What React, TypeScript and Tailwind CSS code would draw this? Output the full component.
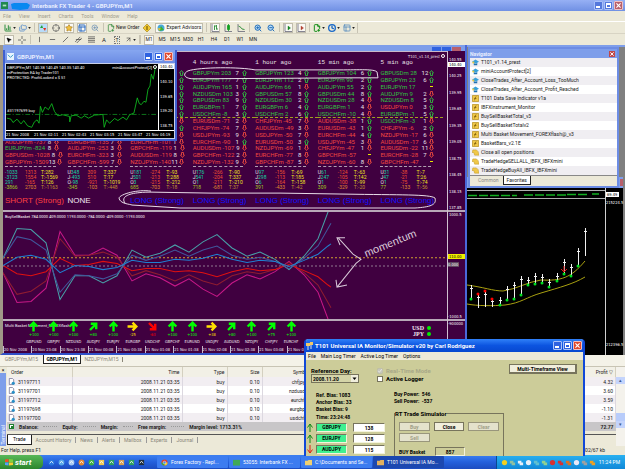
import type { ReactNode } from "react";
import {
  ArrowUpRight,
  BarChart3,
  Clock,
  Crosshair,
  FilePlus2,
  Folders,
  Layout,
  MousePointer2,
  Star,
  ZoomIn,
  ZoomOut,
} from "lucide-react";

type Dir = "u" | "d" | "e" | "";
type Row = [string, number, string, Dir];
type Sum = [string, string, string, string];

const hidden = (n: number): Row[] =>
  Array.from({ length: n }, () => ["", 0, "", ""] as Row);

const columns: { title: string; rows: Row[]; sums: Sum[]; bias: string }[] = [
  {
    title: "",
    rows: [
      ...hidden(10),
      ["AUDJPYm", -737, "8", "d"],
      ["EURJPYm", -824, "8", "d"],
      ["GBPUSDm", -1028, "8", "d"],
      ["GBPJPYm", -1509, "13", "d"],
    ],
    sums: [
      ["", "-1033", "1313", "T:282"],
      ["", "-3123", "1554", "T:-1569"],
      ["", "291", "-165", "T:126"],
      ["", "-3866", "2703", "T:-1163"],
    ],
    bias: "SHORT (Strong)",
  },
  {
    title: "",
    rows: [
      ...hidden(10),
      ["EURGBPm", -135, "7", "d"],
      ["AUDJPYm", -253, "3", "d"],
      ["EURCHFm", -323, "3", "d"],
      ["GBPCHFm", -599, "7", "d"],
    ],
    sums: [
      ["U", "348", "309", "T:337"],
      ["J", "-493", "510", "T:17"],
      ["O", "-98", "-921", "T:-1019"],
      ["", "-345", "-103", "T:-448"],
    ],
    bias: "NONE",
  },
  {
    title: "",
    rows: [
      ["", 0, "", "u"],
      ["", 0, "", "u"],
      ["", 0, "", "u"],
      ["", 0, "", "u"],
      ["", 0, "", "u"],
      ["", 0, "", "u"],
      ["", 0, "", "u"],
      ["", 0, "", "d"],
      ["", 0, "", "u"],
      ["", 0, "", "d"],
      ["EURCHFm", -101, "1", "d"],
      ["GBPCHFm", -119, "1", "d"],
      ["AUDUSDm", -119, "8", "d"],
      ["NZDJPYm", -140, "11", "d"],
    ],
    sums: [
      ["U", "181", "-274", "T:-93"],
      ["J", "501", "-213", "T:288"],
      ["O", "3", "-215", "T:-212"],
      ["", "685", "-703", "T:-18"],
    ],
    bias: "LONG (Strong)",
  },
  {
    title: "4 hours ago",
    rows: [
      ["GBPJPYm", 203, "7", "u"],
      ["EURJPYm", 177, "7", "u"],
      ["AUDJPYm", 165, "1", "u"],
      ["NZDUSDm", 103, "3", "u"],
      ["GBPUSDm", 83, "9", "u"],
      ["EURGBPm", 1, "7", "u"],
      ["USDCHFm", -8, "3", "u"],
      ["EURUSDm", -71, "2", "d"],
      ["CHFJPYm", -74, "7", "d"],
      ["USDJPYm", -93, "9", "d"],
      ["EURCHFm", -90, "1", "u"],
      ["AUDUSDm", -107, "9", "d"],
      ["GBPCHFm", -122, "2", "d"],
      ["NZDJPYm", -132, "9", "d"],
    ],
    sums: [
      ["U", "176", "-266", "T:-90"],
      ["J", "541", "-204", "T:337"],
      ["O", "1", "-211", "T:-210"],
      ["", "718", "-681", "T:37"],
    ],
    bias: "LONG (Strong)",
  },
  {
    title: "1 hour ago",
    rows: [
      ["GBPJPYm", 123, "4", "u"],
      ["EURJPYm", 112, "2", "u"],
      ["AUDJPYm", 66, "1", "d"],
      ["GBPUSDm", 57, "8", "u"],
      ["NZDUSDm", 30, "2", "u"],
      ["EURGBPm", 6, "4", "u"],
      ["USDCHFm", 2, "6", "u"],
      ["CHFJPYm", -45, "7", "d"],
      ["AUDUSDm", -49, "3", "d"],
      ["USDJPYm", -50, "7", "d"],
      ["EURUSDm", -50, "3", "u"],
      ["NZDJPYm", -69, "1", "d"],
      ["EURCHFm", -77, "8", "d"],
      ["GBPCHFm", -87, "5", "d"],
    ],
    sums: [
      ["U", "97", "-156", "T:-69"],
      ["J", "298", "-113", "T:185"],
      ["O", "6", "-164", "T:-158"],
      ["", "391", "-433", "T:-42"],
    ],
    bias: "LONG (Strong)",
  },
  {
    title: "15 min ago",
    rows: [
      ["GBPJPYm", 104, "6", "u"],
      ["EURJPYm", 90, "2", "u"],
      ["AUDJPYm", 55, "2", "u"],
      ["GBPUSDm", 44, "8", "u"],
      ["NZDUSDm", 28, "4", "d"],
      ["EURGBPm", 1, "4", "d"],
      ["USDCHFm", -10, "4", "d"],
      ["AUDUSDm", -38, "1", "u"],
      ["EURUSDm", -43, "1", "u"],
      ["EURCHFm", -44, "4", "u"],
      ["USDJPYm", -45, "3", "d"],
      ["CHFJPYm", -47, "1", "d"],
      ["GBPCHFm", -57, "", "e"],
      ["NZDJPYm", -60, "8", "d"],
    ],
    sums: [
      ["U", "61", "-124", "T:-63"],
      ["J", "247", "-105", "T:142"],
      ["O", "1", "-100", "T:-99"],
      ["", "309", "-329", "T:-20"],
    ],
    bias: "LONG (Strong)",
  },
  {
    title: "5 min ago",
    rows: [
      ["GBPUSDm", 28, "12", "u"],
      ["GBPJPYm", 23, "6", "u"],
      ["EURJPYm", 17, "", "e"],
      ["AUDJPYm", 9, "2", "d"],
      ["NZDUSDm", 8, "5", "u"],
      ["USDJPYm", 0, "3", "u"],
      ["EURGBPm", -1, "5", "u"],
      ["USDCHFm", -3, "1", "d"],
      ["CHFJPYm", -6, "2", "u"],
      ["NZDJPYm", -17, "6", "d"],
      ["AUDUSDm", -17, "6", "d"],
      ["EURUSDm", -22, "11", "d"],
      ["EURCHFm", -28, "7", "d"],
      ["GBPCHFm", -47, "", "e"],
    ],
    sums: [
      ["U", "31", "-38", "T:-7"],
      ["J", "47", "-21", "T:26"],
      ["O", "1", "-75", "T:-74"],
      ["", "77", "-133", "T:-56"],
    ],
    bias: "LONG (Strong)",
  },
];

// x, fast, mid, slow basket totals; the sell side mirrors them around zero
const basket: [number, number, number, number][] = [
  [3, 258, 258, 265],
  [17, 229, 237, 257],
  [31, 230, 240, 255],
  [46, 243, 250, 259],
  [60, 298, 291, 272],
  [75, 275, 274, 265],
  [89, 275, 275, 266],
  [103, 282, 278, 269],
  [117, 275, 273, 267],
  [132, 250, 255, 260],
  [146, 257, 260, 262],
  [160, 253, 256, 262],
  [175, 245, 250, 259],
  [189, 252, 256, 260],
  [203, 242, 250, 258],
  [217, 235, 246, 254],
  [232, 248, 255, 259],
  [247, 256, 259, 262],
  [260, 252, 257, 260],
  [275, 259, 261, 261],
  [289, 269, 268, 266],
  [304, 256, 258, 260],
  [318, 239, 246, 254],
  [328, 213, 229, 246],
  [331, 205, 224, 244],
];

const line = (i: 1 | 2 | 3, mirror = false) =>
  basket.map((p) => `${p[0]},${mirror ? 530 - p[i] : p[i]}`).join(" ");

const movement: [string, string, number, string][] = [
  ["GBPUSD", "+100", 0, "#00ff00"],
  ["GBPJPY", "+100", 0, "#00ff00"],
  ["NZDUSD", "+100", 0, "#00ff00"],
  ["AUDJPY", "+80", 45, "#00ff00"],
  ["EURJPY", "+100", 0, "#00ff00"],
  ["EURGBP", "-25", 90, "#ffe000"],
  ["USDCHF", "-63", 135, "#ff0000"],
  ["GBPCHF", "+100", 0, "#00ff00"],
  ["EURUSD", "+100", 0, "#00ff00"],
  ["USDJPY", "+38", 90, "#ffe000"],
  ["AUDUSD", "+80", 45, "#00ff00"],
  ["NZDJPY", "+100", 0, "#00ff00"],
  ["CHFJPY", "+75", 45, "#00ff00"],
  ["EURCHF", "+100", 0, "#00ff00"],
];

const times = [
  "20 Nov 2008",
  "20 Nov 23:08",
  "20 Nov 23:38",
  "21 Nov 00:08",
  "21 Nov 00:38",
  "21 Nov 01:08",
  "21 Nov 01:38",
  "21 Nov 02:08",
  "21 Nov 02:38",
  "21 Nov 03:08",
  "21 Nov 03:38",
];

const prices = [
  "140.55",
  "140.25",
  "139.95",
  "139.65",
  "139.35",
  "139.05",
  "138.75",
  "138.45",
  "138.15",
  "137.85",
];

const favorites: [string, "hat" | "ind" | "script"][] = [
  ["T101_v1.14_prest", "hat"],
  ["miniAccountProtect[2]", "hat"],
  ["CloseTrades_After_Account_Loss_TooMuch", "hat"],
  ["CloseTrades_After_Account_Profit_Reached", "hat"],
  ["T101 Data Save Indicator v1a", "ind"],
  ["IBFXInstrument_Monitor", "ind"],
  ["BuySellBasketTotal_v3", "ind"],
  ["BuySellBasketTotalv2", "ind"],
  ["Multi Basket Movement_FOREXflash@_v3", "ind"],
  ["BasketBars_v2.1E", "ind"],
  ["Close all open positions", "script"],
  ["TradeHedgeSELLALL_IBFX_IBFXmini", "script"],
  ["TradeHedgeBuyAll_IBFX_IBFXmini", "script"],
];

const orders = [
  ["31197711", "chfjpym", "4.32"],
  ["31197701", "nzdusdm", "3.60"],
  ["31197712", "eurchfm", "3.59"],
  ["31197698", "eurgbpm", "-1.10"],
  ["31197700", "usdchfm", "-1.31"],
];

// x, high, low, dot y, dot color
const bars: [number, number, number, number, string][] = [
  [4, 105, 118, 119, "#00e020"],
  [11, 114, 128, 114, "#ff0000"],
  [18, 111, 127, 111, "#ff0000"],
  [25, 118, 127, 119, "#ff0000"],
  [33, 117, 126, 125, "#00e020"],
  [40, 106, 120, 120, "#00e020"],
  [47, 102, 118, 119, "#00e020"],
  [54, 96, 115, 115, "#00e020"],
  [61, 97, 105, 105, "#00e020"],
  [68, 93, 104, 104, "#00e020"],
  [75, 94, 103, 103, "#00e020"],
  [82, 99, 106, 107, "#00e020"],
  [90, 93, 100, 101, "#00e020"],
  [97, 79, 95, 94, "#00e020"],
  [104, 84, 96, 96, "#00e020"],
  [111, 68, 86, 86, "#00e020"],
  [118, 48, 76, 0, ""],
];

function ValueArrow({ dir }: { dir: Dir }) {
  if (dir === "") return null;
  if (dir === "e") return <span className="h-px w-[3px] bg-[#e8e800]" />;
  return (
    <svg
      viewBox="0 0 5 6"
      className={dir === "u" ? "h-[6px] w-[5px] text-[#30b840]" : "h-[6px] w-[5px] rotate-180 text-[#e84840]"}
    >
      <path d="M2.5 .5 4.5 3H3.5V5.5H1.5V3H.5Z" fill="none" stroke="currentColor" strokeWidth=".9" />
    </svg>
  );
}

function WinButtons({ dim = false }: { dim?: boolean }) {
  const blue = dim ? "bg-[#5478dc]" : "bg-[#2f62e0]";
  return (
    <div className="flex gap-px">
      <button aria-label="Minimize" className={`flex size-[9px] items-end rounded-[1px] border border-[#a8c0f8] p-px ${blue}`}>
        <span className="h-[2px] w-[4px] bg-white" />
      </button>
      <button aria-label="Maximize" className={`size-[9px] rounded-[1px] border border-[#a8c0f8] p-px ${blue}`}>
        <span className="block size-[5px] border border-t-2 border-white" />
      </button>
      <button
        aria-label="Close"
        className={`flex size-[9px] items-center justify-center rounded-[1px] border border-[#f0c0c0] ${dim ? "bg-[#b8606c]" : "bg-[#e0482c]"}`}
      >
        <svg viewBox="0 0 6 6" className="size-[5px]" stroke="#fff" strokeWidth="1.4">
          <path d="M.5 .5 5.5 5.5M5.5 .5 .5 5.5" />
        </svg>
      </button>
    </div>
  );
}

function Tool({ label, active = false, children }: { label: string; active?: boolean; children: ReactNode }) {
  return (
    <button
      aria-label={label}
      className={`flex h-[10px] min-w-[10px] items-center justify-center ${active ? "border border-[#c0bcac] bg-[#faf9f4]" : ""}`}
    >
      {children}
    </button>
  );
}

function Candles({ color, kind }: { color: string; kind: number }) {
  return (
    <svg viewBox="0 0 8 8" className="size-[8px]" fill="none" stroke="#667" strokeWidth=".8">
      <path d="M1 0V7.5H8" />
      {kind === 0 && <path d="M3.5 1.5V6M5.5 1V5.5M3.5 2H5M5.5 5H7" stroke={color} />}
      {kind === 1 && <path d="M4.5 0V7M3.5 1.5H5.5V5.5H3.5Z" stroke={color} fill={color} />}
      {kind === 2 && <path d="M1.5 2 4 3.5 5 5 7.5 5.5" stroke={color} />}
      {kind === 3 && <path d="M4 2V6L6.500 4Z" stroke={color} strokeWidth=".4" fill={color} />}
    </svg>
  );
}

function Drop() {
  return (
    <svg viewBox="0 0 4 3" className="ml-px h-[2px] w-[3px]">
      <path d="M0 0H4L2 3Z" fill="#222" />
    </svg>
  );
}

function Toolbars() {
  return (
    <div className="bg-[#ece9d8] text-[5px]">
      <div className="flex h-[12px] items-center border-t border-white pl-[4px]">
        <div className="flex shrink-0 items-center gap-[3px] border-r border-[#c8c4b4] pr-[2px]">
          <Tool label="New chart">
            <BarChart3 className="size-[8px] text-[#2a8c3c]" strokeWidth={3} />
            <Drop />
          </Tool>
          <Tool label="Profiles">
            <Folders className="size-[8px] text-[#3878c8]" />
            <Drop />
          </Tool>
          <span className="h-[9px] w-px bg-[#c8c4b4]" />
          <Tool label="Market watch" active>
            <svg viewBox="0 0 8 8" className="size-[8px]">
              <path d="M0 0H8V8H0Z" fill="#b8dcf8" />
              <path d="M1 4 3 1 4 4Z" fill="#20a030" />
              <path d="M4 4H7L6 7Z" fill="#e03020" />
            </svg>
          </Tool>
          <Tool label="Data window">
            <Crosshair className="size-[8px] text-[#555]" />
          </Tool>
          <Tool label="Navigator" active>
            <Star className="size-[8px] fill-[#f0c040] text-[#a87818]" />
          </Tool>
          <Tool label="Terminal" active>
            <Layout className="size-[8px] text-[#2868c0]" strokeWidth={3} />
          </Tool>
          <Tool label="Tester">
            <ZoomIn className="size-[8px] text-[#6088b0]" />
          </Tool>
          <span className="h-[9px] w-px bg-[#c8c4b4]" />
          <button className="flex h-[10px] items-center gap-px whitespace-nowrap">
            <FilePlus2 className="size-[8px] text-[#20802c]" />
            New Order
          </button>
          <Tool label="MetaEditor">
            <svg viewBox="0 0 8 8" className="size-[8px]">
              <path d="M4 0 8 4 4 8 0 4Z" fill="#f0c830" stroke="#a07c10" strokeWidth=".6" />
              <path d="M4 2V6" stroke="#604800" />
            </svg>
          </Tool>
          <button className="flex h-[10px] items-center gap-px whitespace-nowrap border border-[#c0bcac] bg-[#faf9f4] px-px">
            <svg viewBox="0 0 8 8" className="size-[8px]">
              <circle cx="4" cy="4" r="3.500" fill="#48a8d8" />
              <path d="M2 7 4 2 7 6Z" fill="#38b038" />
              <path d="M1 4 4 4.500 2 7Z" fill="#e8c020" />
            </svg>
            Expert Advisors
          </button>
          <span className="h-[9px] w-px bg-[#c8c4b4]" />
          <Tool label="Bar chart" active>
            <Candles color="#108020" kind={0} />
          </Tool>
          <Tool label="Candlesticks">
            <Candles color="#10a020" kind={1} />
          </Tool>
          <Tool label="Line chart">
            <Candles color="#108020" kind={2} />
          </Tool>
          <span className="h-[9px] w-px bg-[#c8c4b4]" />
          <Tool label="Zoom in">
            <ZoomIn className="size-[8px] fill-[#b8dcf8] text-[#2870b8]" strokeWidth={3} />
          </Tool>
          <Tool label="Zoom out">
            <ZoomOut className="size-[8px] fill-[#b8dcf8] text-[#2870b8]" strokeWidth={3} />
          </Tool>
          <span className="h-[9px] w-px bg-[#c8c4b4]" />
          <Tool label="Auto scroll" active>
            <Candles color="#108020" kind={3} />
          </Tool>
          <Tool label="Chart shift" active>
            <Candles color="#b04030" kind={3} />
          </Tool>
          <span className="h-[9px] w-px bg-[#c8c4b4]" />
          <Tool label="Indicators">
            <FilePlus2 className="size-[8px] text-[#18901c]" strokeWidth={3} />
            <Drop />
          </Tool>
          <Tool label="Periods">
            <Clock className="size-[8px] text-[#1868c8]" strokeWidth={4} />
            <Drop />
          </Tool>
          <Tool label="Templates">
            <Layout className="size-[8px] text-[#3878b8]" />
            <Drop />
          </Tool>
        </div>
      </div>
      <div className="flex h-[12px] items-center gap-[3px] border-t border-[#d8d4c4] pl-[4px]">
        <Tool label="Cursor" active>
          <MousePointer2 className="size-[6px] fill-black text-black" />
        </Tool>
        <Tool label="Crosshair">
          <svg viewBox="0 0 8 8" className="size-[8px]" stroke="#555" strokeWidth=".8">
            <path d="M4 0V3M4 5V8M0 4H3M5 4H8" />
          </svg>
        </Tool>
        <span className="h-[9px] w-px bg-[#c8c4b4]" />
        {["M4 1V7", "M1 4H7", "M1 7 7 1", "M0 7 6 1M2 8 8 2M1 4 7 4", "M0 1H8M0 3H8M0 5H8M0 7H8"].map((d) => (
          <Tool key={d} label="Draw line">
            <svg viewBox="0 0 8 8" className="size-[7px]" stroke="#444" strokeWidth=".8">
              <path d={d} />
            </svg>
          </Tool>
        ))}
        <Tool label="Text">
          <span className="text-[6px]">A</span>
        </Tool>
        <Tool label="Text label">
          <span className="border border-dotted border-[#777] px-px leading-[6px]">T</span>
        </Tool>
        <Tool label="Arrows">
          <ArrowUpRight className="size-[7px] text-[#333]" />
          <Drop />
        </Tool>
        <span className="h-[9px] w-[2px] bg-[#c8c4b4]" />
        <Tool label="M1" active>
          M1
        </Tool>
        {["M5", "M15", "M30", "H1", "H4", "D1", "W1", "MN"].map((p) => (
          <Tool key={p} label={p}>
            {p}
          </Tool>
        ))}
      </div>
    </div>
  );
}

function SignalTable() {
  return (
    <div className="relative flex h-[159px] flex-col border-t border-[#c8b8c8] pl-[2px] text-[#e8e0e8]">
      <div className="flex h-[8px] items-center justify-end gap-px pr-[2px] font-['DejaVu_Sans_Condensed',sans-serif] text-[4px]">
        T101_v1.14_prest
        <span className="size-[4px] rounded-full border border-white" />
      </div>
      <div className="grid w-[438px] grid-cols-7">
        {columns.map((c, i) => (
          <div key={i} className="min-w-0">
            <h3 className="h-[10px] whitespace-nowrap font-['Liberation_Mono',monospace] text-[6px] leading-[6px]">{c.title}</h3>
            <div className="flex h-[95px] flex-col text-[6px] leading-[6px]">
              {c.rows.map((r, j) => (
                <div
                  key={j}
                  className={`flex flex-1 items-center whitespace-nowrap ${j === 6 ? "border-b border-dashed border-[#a0a020]" : ""} ${
                    r[1] > 0 || j === 6 || (i === 6 && j === 7) || (i === 0 && j === 11) ? "text-[#30c040]" : "text-[#f04840]"
                  }`}
                >
                  <span className="min-w-[41px]">{r[0] && `${r[0]} ${r[1]}`}</span>
                  <span className="min-w-[7px] text-center text-[#e8e0e8]">{r[2]}</span>
                  <span className="flex w-[7px] justify-center">
                    <ValueArrow dir={r[3]} />
                  </span>
                </div>
              ))}
            </div>
            <div className="mt-px mr-[12px] mb-[3px] border-t border-dashed border-[#b0a0b0]" />
            {c.sums.map((s, j) => (
              <div key={j} className="flex h-[5px] items-center whitespace-nowrap text-[5px] leading-[5px]">
                <span className="flex w-[20px]">
                  {s[0]}
                  <span className={j === 3 ? "text-[#a0c820]" : "text-[#10d8a0]"}>{s[1]}</span>
                </span>
                <span className={j === 3 ? "w-[16px] text-[#e08830]" : "w-[16px] text-[#f05030]"}>{s[2]}</span>
                <span className={j === 3 ? "text-[#c09030]" : "text-[#f0e020]"}>{s[3]}</span>
              </div>
            ))}
            <p
              className={`mt-[6px] whitespace-nowrap font-['Liberation_Sans',sans-serif] text-[8px] leading-[10px] ${
                i === 0 ? "text-[#ff4040]" : i === 1 ? "text-[#f0e8f0]" : "text-[#1010ff]"
              }`}
            >
              {c.bias}
            </p>
          </div>
        ))}
      </div>
      {/* hand drawn loops */}
      <svg viewBox="3 52 444 159" preserveAspectRatio="none" className="absolute inset-0 h-full w-full" fill="none" stroke="#e8dce8" strokeWidth="1">
        <path d="M188 71C182 74 184 79 194 79L350 78 378 78 377 72C374 69 360 70 340 70L255 70C240 67 200 67 188 71Z" />
        <path d="M151 192C138 190 120 195 119 199 120 205 130 205 132 206L180 209 290 209 415 209C430 208 437 206 435 199 430 195 400 196 345 195L280 194 210 194 151 193C130 193 120 197 125 204" />
      </svg>
    </div>
  );
}

function MainChart() {
  return (
    <section className="absolute inset-y-0 left-0 flex w-[467px] flex-col border-r-2 border-b-2 border-l-[3px] border-r-[#4a68d8] border-b-[#3050c8] border-l-[#a09888] bg-[#400040]">
      <header className="flex h-[6px] shrink-0 items-end justify-end gap-px overflow-hidden bg-[#7e9eea] pr-[4px]">
        <span className="h-[4px] w-[9px] bg-[#2f62e0]" />
        <span className="h-[4px] w-[9px] bg-[#2f62e0]" />
        <span className="h-[4px] w-[9px] bg-[#b8606c]" />
      </header>
      <div className="flex min-h-0 flex-1">
        <div className="flex min-w-0 flex-1 flex-col border-r border-[#d0c0d0]">
          <SignalTable />
          <div className="relative min-h-0 flex-1 border-t-2 border-[#b8a8b8]">
            <p className="absolute top-[2px] left-[2px] text-[4px] leading-[6px] text-white">
              BuySellBasket 784.0000 409.0000 1193.0000 -784.0000 -409.0000 -1193.0000
            </p>
            <svg viewBox="3 213 444 104" preserveAspectRatio="none" className="h-full w-full" fill="none" strokeWidth="1">
              <path d="M3 257.500H447" stroke="#d0a030" strokeDasharray="2 2" />
              <path d="M3 265.500H447" stroke="#907890" strokeDasharray="2 2" />
              <polyline points={line(1, true)} stroke="#c81888" />
              <polyline points={line(2, true)} stroke="#901c30" />
              <polyline points={line(3, true)} stroke="#e01010" />
              <polyline points={line(1)} stroke="#48a0a8" />
              <polyline points={line(2)} stroke="#40589c" />
              <polyline points={line(3)} stroke="#2080d0" />
              <path d="M338 238 353 254 361 259 356 263 337 286M345 238 337 238 340 245M336 279 337 286 347 284" stroke="#d8c8d8" />
              <text x="366" y="257" transform="rotate(-22 366 257)" fill="#d8c8d8" stroke="none" className="font-['Lato',sans-serif] text-[11px]">
                momentum
              </text>
            </svg>
          </div>
          <div className="relative h-[27px] shrink-0 border-t-2 border-[#b8a8b8] text-[#f0e8f0]">
            <p className="absolute top-[2px] left-[2px] text-[4px] leading-[6px]">Multi Basket Movement_FOREXflash</p>
            <div className="relative ml-[21px] grid w-[277px] grid-cols-14">
              {movement.map(([pair, pct, deg, color]) => (
                <div key={pair} className="flex min-w-0 flex-col items-center font-['DejaVu_Sans_Condensed',sans-serif] text-[4px] leading-[6px]">
                  <svg viewBox="0 0 10 10" className="size-[11px]">
                    <path d="M5 9.500V1.500M1.500 5 5 1.500 8.500 5" fill="none" stroke={color} strokeWidth="2.200" transform={`rotate(${deg} 5 5)`} />
                  </svg>
                  <span style={{ color }}>{pct}</span>
                  <span className="mt-px">{pair}</span>
                </div>
              ))}
            </div>
            <ul className="absolute top-[4px] right-[16px] font-['Liberation_Serif',serif] text-[6px] leading-[6px] font-bold">
              {["USD", "JPY"].map((c) => (
                <li key={c} className="flex items-center justify-end gap-[3px]">
                  {c}
                  <span className="size-[4px] rounded-full bg-[#00f000]" />
                </li>
              ))}
            </ul>
          </div>
          <div className="grid h-[7px] w-[312px] shrink-0 grid-cols-11 font-['DejaVu_Sans_Condensed',sans-serif] text-[4px] leading-[7px] text-[#f0e8f0]">
            {times.map((t) => (
              <span key={t} className="min-w-0 whitespace-nowrap border-l border-[#c8b8c8]">
                {t}
              </span>
            ))}
          </div>
        </div>
        <div className="flex w-[17px] shrink-0 flex-col font-['DejaVu_Sans_Condensed',sans-serif] text-[4px] leading-[5px] text-white">
          <div className="relative flex h-[159px] flex-col justify-between pt-[6px] pl-px">
            {prices.map((p) => (
              <span key={p}>{p}</span>
            ))}
            <span className="absolute top-[11px] left-0 w-full bg-white pl-px text-black">140.40</span>
          </div>
          <div className="flex min-h-0 flex-1 flex-col border-t-2 border-[#b8a8b8]">
            <span className="pl-px">1000.5</span>
            <span className="mt-[37px] bg-[#f0f000] pl-px text-black">110.00</span>
            <span className="mt-[3px] w-[11px] bg-[#604860]">0.000</span>
            <span className="mt-auto">-1000.5</span>
          </div>
          <span className="h-[34px] shrink-0 border-t-2 border-[#b8a8b8]">-900000</span>
        </div>
      </div>
    </section>
  );
}

function MiniChart() {
  return (
    <section className="absolute top-[5px] left-[3px] flex h-[91px] w-[174px] flex-col border-2 border-t-0 border-[#4060d0] bg-black">
      <header className="flex h-[13px] shrink-0 items-center justify-between bg-linear-to-b from-[#86a6f0] to-[#6c8ce4] px-[2px]">
        <h2 className="flex items-center gap-[3px] text-[6px] font-bold text-[#e8eeff]">
          <svg viewBox="0 0 8 8" className="size-[7px]">
            <path d="M0 0H8V8H0Z" fill="#e8f4ff" />
            <path d="M1 2 4 5 7 2" stroke="#2090c0" fill="none" />
          </svg>
          GBPJPYm,M1
        </h2>
        <WinButtons />
      </header>
      <div className="relative flex min-h-0 flex-1 flex-col border border-[#c8d0e8] text-[4px] leading-[5px] text-white">
        <div className="flex min-h-0 flex-1">
          <div className="relative min-w-0 flex-1">
            <div className="absolute inset-x-0 top-px flex justify-between px-px whitespace-nowrap">
              <p>
                GBPJPYm,M1 140.38 140.49 140.35 140.40
                <br />
                mProtection EA by Trader101
                <br />
                PROTECTED: ProfitLocked = $ 51
              </p>
              <span className="flex gap-px">
                miniAccountProtect[2]
                <span className="size-[4px] rounded-full border border-white" />
              </span>
            </div>
            <svg viewBox="15 195 455 195" preserveAspectRatio="none" className="h-full w-full" fill="none" strokeWidth="2.500">
              <path d="M15 344H470" stroke="#108820" strokeDasharray="14 6 3 6" />
              <polyline
                stroke="#10c020"
                points="18,355 30,358 36,368 48,358 60,372 68,362 80,378 92,382 100,366 108,360 114,370 118,320 124,338 132,322 142,330 152,312 160,335 170,348 185,345 205,350 206,366 210,348 225,346 240,355 250,348 262,355 280,346 305,344 309,382 316,360 325,370 340,356 350,362 365,352 376,360 385,345 398,340 408,295 414,312 420,315 428,305 434,308 440,270 446,260 450,225 456,240 462,205"
              />
            </svg>
            <span className="absolute bottom-[17px] left-px">#31197699 buy</span>
          </div>
          <div className="flex w-[16px] flex-col justify-between border-l border-white pb-[2px] font-['DejaVu_Sans_Condensed',sans-serif]">
            <span className="bg-white pl-px text-black">140.40</span>
            <span className="pl-px">140.10</span>
            <span className="pl-px">139.65</span>
            <span className="pl-px">139.20</span>
            <span className="pl-px">138.75</span>
          </div>
        </div>
        <div className="grid h-[8px] grid-cols-6 border-t border-white font-['DejaVu_Sans_Condensed',sans-serif] leading-[7px]">
          {["21 Nov 2008", "21 Nov 02:11", "21 Nov 02:43", "21 Nov 03:15", "21 Nov 03:47", "21 Nov 04:19"].map((t) => (
            <span key={t} className="min-w-0 whitespace-nowrap">
              {t}
            </span>
          ))}
        </div>
      </div>
    </section>
  );
}

function BasketBars() {
  return (
    <section className="absolute top-[143px] right-[2px] bottom-0 left-[467px] flex bg-black font-['DejaVu_Sans_Condensed',sans-serif] text-[4px] leading-[5px] text-white">
      <svg viewBox="0 8 138 167" preserveAspectRatio="none" className="h-full min-w-0 flex-1" fill="none">
        <path d="M0 10.500H138M0 18.500H138" stroke="#b0b0b0" />
        <path d="M1 15.500H50M57 15H100M100 14.500H120M125 14H132" stroke="#10b020" strokeDasharray="9 2" strokeWidth="1.500" />
        <path d="M0 105C16 107 26 111 36 111 50 109 60 102 74 100 94 101 104 98 118 81" stroke="#a8a010" />
        <path d="M0 124C10 126 26 126 38 125 54 123 60 117 74 113 94 107 106 104 118 97" stroke="#a8a010" />
        {bars.map(([x, hi, lo, dot, color]) => (
          <g key={x}>
            <path d={`M${x}.5 ${hi}V${lo}M${x - 1} ${hi + 3}.5H${x + 2}`} stroke="#f0f0f0" />
            {color && <circle cx={x} cy={dot} r="1.500" fill={color} />}
          </g>
        ))}
        <path d="M97 86V92M94 89 97 92 100 89" stroke="#e01818" />
      </svg>
      <div className="flex w-[18px] flex-col border-l border-[#d0d0d0]">
        <span className="mt-[4px] w-[13px] bg-white pl-px text-black">69.49</span>
        <span className="mt-[3px]">215224.5</span>
        <span className="mt-auto mb-[8px]">212396.5</span>
      </div>
    </section>
  );
}

function Navigator() {
  return (
    <section className="absolute top-[2px] right-[6px] flex w-[151px] flex-col border-2 border-[#6c8ce4] bg-white text-[#222]">
      <header className="flex h-[9px] items-center justify-between bg-[#7e9eea] pr-[2px]">
        <h2 className="text-[5px] leading-[8px] font-bold text-[#e8eeff]">Navigator</h2>
        <button aria-label="Close navigator" className="flex size-[6px] items-center justify-center bg-[#c04848]">
          <svg viewBox="0 0 6 6" className="size-[4px]" stroke="#fff" strokeWidth="1.400">
            <path d="M.5 .5 5.5 5.5M5.5 .5 .5 5.5" />
          </svg>
        </button>
      </header>
      <ul className="text-[5px]">
        {favorites.map(([name, kind]) => (
          <li key={name} className="flex h-[9px] items-center gap-[2px] pl-[2px] whitespace-nowrap odd:bg-[#f0eef2]">
            <svg viewBox="0 0 8 8" className="size-[7px]">
              {kind === "hat" && (
                <>
                  <path d="M0 3 4 .5 8 3 4 5.500Z" fill="#38a0d8" />
                  <path d="M2 4.500V7H6V4.500L4 5.700Z" fill="#2070b0" />
                  <circle cx="1.500" cy="4" r="1.200" fill="#e8c840" />
                </>
              )}
              {kind === "ind" && (
                <>
                  <path d="M.5 .5H7.500V7.500H.5Z" fill="#f0c848" stroke="#b08818" strokeWidth=".8" />
                  <path d="M5 2C3 1.500 4 6 2.500 6M2.500 4H5" stroke="#705000" fill="none" strokeWidth=".8" />
                </>
              )}
              {kind === "script" && <path d="M1 1H5L7 3 8 7H3L2 4H0Z" fill="#f0c848" stroke="#c09828" strokeWidth=".6" />}
            </svg>
            {name}
          </li>
        ))}
      </ul>
      <div className="flex h-[11px] items-start border-t border-[#888] bg-[#ece9d8] pl-[4px] text-[5px] leading-[8px]">
        <button className="px-[4px] text-[#888]">Common</button>
        <button className="border border-t-0 border-[#222] bg-white px-[3px]">Favorites</button>
      </div>
    </section>
  );
}

function ChartTabs() {
  return (
    <nav className="flex h-[12px] shrink-0 border-b border-[#c8c4b4] bg-[#f4f2e8] text-[5px] leading-[9px] text-[#8a8678]">
      <button className="h-[9px] w-[43px]">GBPJPYm,M15</button>
      <button className="h-[9px] w-[38px] border border-t-0 border-[#222] bg-white leading-[8px] font-bold text-black">GBPJPYm,M1</button>
      <button className="h-[9px] w-[41px]">NZDJPYm,M15</button>
      <span className="mt-[2px] h-[5px] w-px bg-[#8a8678]" />
    </nav>
  );
}

function Terminal() {
  return (
    <section className="flex h-[79px] shrink-0 bg-[#ece9d8]">
      <div className="flex w-[6px] flex-col items-center justify-between bg-[#7e9eea] text-[5px] leading-[6px] text-white">
        <span className="w-full bg-[#ece9d8] text-center text-black">×</span>
        <span className="rotate-180 pt-[2px] [writing-mode:vertical-rl]">Terminal</span>
      </div>
      <div className="flex min-w-0 flex-1 flex-col pl-px">
        <table className="w-full table-fixed border-collapse text-right text-[5px] leading-[6px] text-[#222]">
          <thead className="bg-[#f2f0e6]">
            <tr className="h-[10px] [&>th]:border-r [&>th]:border-[#d4d0c0] [&>th]:pr-[2px] [&>th]:font-normal">
              <th className="w-[65px] pl-[4px] text-left">Order</th>
              <th className="w-[110px]">Time</th>
              <th className="w-[45px]">Type</th>
              <th className="w-[35px]">Size</th>
              <th className="w-[50px]">Symbol</th>
              <th>Profit ▽</th>
            </tr>
          </thead>
          <tbody>
            {orders.map(([id, symbol, profit]) => (
              <tr key={id} className="h-[9px] bg-white odd:bg-[#f2eef2] [&>td]:border-r [&>td]:border-[#dcd8e0] [&>td]:pr-[2px]">
                <td>
                  <span className="flex items-center gap-[3px] pl-px">
                    <svg viewBox="0 0 8 8" className="size-[7px]">
                      <path d="M1.500 .5H5L6.500 2V7.500H1.500Z" fill="#fff" stroke="#668" strokeWidth=".8" />
                      <circle cx="6" cy="6" r="1.800" fill="#2890c8" />
                    </svg>
                    {id}
                  </span>
                </td>
                <td>2008.11.21 03:35</td>
                <td>buy</td>
                <td>0.10</td>
                <td>{symbol}</td>
                <td>{profit}</td>
              </tr>
            ))}
            <tr className="h-[9px] bg-[#c8c6c8] font-bold">
              <td colSpan={5} className="text-left">
                <span className="flex items-center gap-[5px] pl-[2px] whitespace-nowrap">
                  <span className="flex size-[5px] items-center justify-center border border-[#208030] bg-white">
                    <span className="size-[2px] bg-[#208030]" />
                  </span>
                  <span>Balance:</span>
                  <span className="w-[14px] border-b border-dotted border-[#999]" />
                  <span>Equity:</span>
                  <span className="w-[13px] border-b border-dotted border-[#999]" />
                  <span>Margin:</span>
                  <span className="w-[10px] border-b border-dotted border-[#999]" />
                  <span>Free margin:</span>
                  <span className="w-[13px] border-b border-dotted border-[#999]" />
                  <span>Margin level: 1713.31%</span>
                </span>
              </td>
              <td className="pr-[2px]">72.77</td>
            </tr>
          </tbody>
        </table>
        <nav className="mt-auto mb-[2px] flex h-[10px] items-center border-t border-[#555] text-[5px] text-[#8a8678]">
          <button className="h-[10px] border border-t-0 border-[#222] bg-white px-[5px] text-black">Trade</button>
          {["Account History", "News", "Alerts", "Mailbox", "Experts", "Journal"].map((t) => (
            <button key={t} className="border-r border-[#999] px-[4px] leading-[6px]">
              {t}
            </button>
          ))}
        </nav>
      </div>
      <div className="flex w-[9px] flex-col justify-between bg-[#f4f2ec] pt-[10px] pb-[18px]">
        <button aria-label="Scroll up" className="flex h-[7px] items-center justify-center bg-[#c4d4fc] text-[5px] text-[#405890]">
          ▴
        </button>
        <span className="mt-[29px] h-[14px] bg-[#b8ccfa]" />
        <button aria-label="Scroll down" className="flex h-[7px] items-center justify-center bg-[#c4d4fc] text-[5px] text-[#405890]">
          ▾
        </button>
      </div>
    </section>
  );
}

const fieldClass = "border border-[#77745c] border-r-[#f4f4dc] border-b-[#f4f4dc] text-center";

function Monitor() {
  return (
    <section className="absolute top-[339px] right-[40px] bottom-[13px] left-[304px] flex flex-col overflow-hidden rounded-t-[4px] border-x-2 border-[#1048d8] bg-[#cccc99] text-[5px] leading-[6px] text-black">
      <header className="flex h-[13px] shrink-0 items-center justify-between bg-linear-to-b from-[#3080f8] via-[#0c54e0] to-[#0848d0] pr-px">
        <h2 className="flex items-center gap-px text-[6px] font-bold whitespace-nowrap text-white">
          <svg viewBox="0 0 8 8" className="size-[8px]">
            <path d="M0 1H4V4H0ZM4 0H7V3H4Z" fill="#f0c868" />
            <path d="M2 4V8M5 3V7" stroke="#e0e0e0" />
          </svg>
          T101 Universal IA Monitor/Simulator v20 by Carl Rodriguez
        </h2>
        <WinButtons />
      </header>
      <nav className="flex h-[8px] shrink-0 items-center gap-[5px] bg-[#ece9d8] pl-[2px]">
        {["File", "Main Log Timer", "Active Log Timer", "Options"].map((m) => (
          <button key={m}>{m}</button>
        ))}
      </nav>
      <div className="flex flex-1 items-start font-bold">
        <div className="flex w-[88px] shrink-0 flex-col pl-px">
          <div className="mt-[7px] ml-[4px] flex w-[48px] flex-col">
            <label htmlFor="refday" className="text-[6px] leading-[7px] whitespace-nowrap underline">
              Reference Day:
            </label>
            <div className="relative">
              <select
                id="refday"
                className="block h-[9px] w-full appearance-none border border-[#77745c] bg-[#d4d4a8] pl-px text-[5px] leading-[6px]"
              >
                <option>2008.11.20</option>
              </select>
              <svg viewBox="0 0 7 7" className="pointer-events-none absolute top-px right-px size-[7px] bg-[#f0eedc]">
                <path d="M1.500 2.500H5.500L3.500 5Z" />
              </svg>
            </div>
          </div>
          <div className="mt-[9px] ml-[9px] leading-[7px]">
            <p>Ref. Bias: 1083</p>
            <p>Anchor Bias: 33</p>
            <p>Basket Bias: 9</p>
            <p className="mt-px">Time: 23:24:48</p>
          </div>
          <div className="mt-[2px] flex flex-col gap-[2px]">
            {[
              ["GBPJPY", "138", "#108818", ""],
              ["EURJPY", "128", "#108818", ""],
              ["AUDJPY", "115", "#e02010", "rotate-180"],
            ].map(([pair, value, color, rot]) => (
              <div key={pair} className="flex h-[9px] items-center">
                <svg viewBox="0 0 6 9" className={`mr-[3px] h-[9px] w-[6px] ${rot}`} fill="none" stroke={color}>
                  <path d="M3 9V1M.5 4.500 3 1 5.500 4.500" />
                </svg>
                <label htmlFor={pair} className={`h-[9px] w-[31px] bg-[#40f090] leading-[7px] ${fieldClass}`}>
                  {pair}
                </label>
                <input id={pair} defaultValue={value} className={`ml-[6px] h-[9px] w-[32px] bg-white ${fieldClass}`} />
              </div>
            ))}
          </div>
        </div>
        <div className="min-w-0 shrink-0">
          <div className="mt-[7px] -ml-[17px] flex flex-col gap-px">
            <label className="flex items-center gap-[3px] text-[6px] leading-[7px] text-[#a8a888]">
              <input type="checkbox" disabled checked readOnly className="size-[6px]" />
              Real-Time Mode
            </label>
            <label className="flex items-center gap-[3px] text-[6px] leading-[7px]">
              <input type="checkbox" className="size-[6px] appearance-none border border-[#77745c] bg-white" />
              Active Logger
            </label>
          </div>
          <div className="mt-[9px] leading-[7px]">
            <p>Buy Power: &nbsp;546</p>
            <p>Sell Power: &nbsp;-537</p>
          </div>
          <fieldset className="mt-[5px] h-[60px] w-[110px] border border-[#77745c] pl-[4px]">
            <legend className="-ml-[4px] text-[6px] leading-[7px]">RT Trade Simulator</legend>
            <div className="mt-[5px] grid grid-cols-3 gap-x-[4px] gap-y-[2px] pr-[4px]">
              <button disabled className="h-[9px] border border-[#99967c] bg-[#e4e2cc] text-[#a0a088]">
                Buy
              </button>
              <button className="h-[9px] border border-[#77745c] bg-[#f0eedc]">Close</button>
              <button disabled className="h-[9px] border border-[#99967c] bg-[#e4e2cc] text-[#a0a088]">
                Clear
              </button>
              <button disabled className="h-[9px] border border-[#99967c] bg-[#e4e2cc] text-[#a0a088]">
                Sell
              </button>
            </div>
            <div className="mt-[5px] flex items-center">
              <label htmlFor="buybasket" className="w-[36px]">
                BUY Basket
              </label>
              <input id="buybasket" defaultValue="857" className={`h-[9px] w-[30px] bg-[#cccc99] ${fieldClass}`} />
            </div>
          </fieldset>
        </div>
        <button className="mt-[4px] mr-[6px] ml-auto h-[10px] w-[68px] border border-r-2 border-b-2 border-[#77745c] bg-[#f0eedc]">
          Multi-Timeframe View
        </button>
      </div>
    </section>
  );
}

function Taskbar() {
  const quick = ["#2878e0", "#58a8e8", "#a8c8f0", "#e88830", "#40b040", "#f0c850", "#30a060", "#d8a050", "#30a060", "#203040"];
  const tray = ["#f0d020", "#90c0a0", "#e8f0f8", "#e8f0f8", "#60c0d0", "#90d090", "#d83030", "#d83030", "#e07020", "#e8e8f8", "#a0a0a0", "#f0a020"];
  return (
    <footer className="flex h-[14px] shrink-0 items-stretch bg-linear-to-b from-[#3c80f0] via-[#2460dc] to-[#1c4cc0] text-[5px] text-white">
      <button className="flex w-[43px] shrink-0 items-center gap-[2px] rounded-r-[5px] bg-linear-to-b from-[#58b858] to-[#2c862c] pl-[5px] text-[8px] font-bold italic">
        <svg viewBox="0 0 8 8" className="size-[8px] shrink-0">
          <path d="M0 1.500 3.500 1V4H0Z" fill="#f05028" />
          <path d="M4 1 8 1.500V4H4Z" fill="#80d040" />
          <path d="M0 4.500H3.500V7.500L0 7Z" fill="#58a0f8" />
          <path d="M4 4.500H8V7L4 7.500Z" fill="#f8d030" />
        </svg>
        start
      </button>
      <div className="ml-[5px] flex w-[102px] shrink-0 items-center gap-[3px]">
        {quick.map((c, i) => (
          <svg key={i} viewBox="0 0 8 8" className="size-[7px]">
            {i > 4 ? <path d="M1 1H7V7H1Z" fill={c} /> : <circle cx="4" cy="4" r="3.300" fill={c} />}
            <path d="M2 5 4 2.500 6 5" fill="none" stroke="#fff" strokeWidth=".9" />
          </svg>
        ))}
      </div>
      <div className="ml-[7px] flex min-w-0 flex-1 items-center gap-px whitespace-nowrap">
        {[
          ["Forex Factory - Repl...", "#f0c030"],
          ["53055: Interbank FX ...", "#40a858"],
          ["C:\\Documents and Se...", "#f0d070"],
          ["T101 Universal IA Mo...", "#e0b060"],
        ].map(([label, color], i) => (
          <button
            key={label}
            className={`flex h-[12px] w-[71px] shrink-0 items-center gap-[3px] rounded-[1px] pl-[4px] ${i === 3 ? "bg-[#1c48b0]" : "bg-[#3c7cf0]"}`}
          >
            <svg viewBox="0 0 8 8" className="size-[7px]">
              {i === 0 ? (
                <>
                  <circle cx="4" cy="4" r="3.500" fill="#e04030" />
                  <path d="M4 4 7.500 4A3.500 3.500 0 0 1 4 7.500Z" fill="#f0d030" />
                  <path d="M4 4 4 7.500A3.500 3.500 0 0 1 .5 4Z" fill="#38a848" />
                  <circle cx="4" cy="4" r="1.500" fill="#4888f0" stroke="#fff" strokeWidth=".5" />
                </>
              ) : i === 1 ? (
                <path d="M0 1H8V7.500H0Z" fill={color} />
              ) : (
                <path d="M0 2H3L4 1H8V7H0Z" fill={color} />
              )}
            </svg>
            {label}
          </button>
        ))}
      </div>
      <div className="flex w-[129px] shrink-0 items-center gap-px border-l border-[#0c4890] bg-linear-to-b from-[#28b0f0] to-[#1088d8] pr-[5px] pl-[4px]">
        {tray.map((c, i) => (
          <svg key={i} viewBox="0 0 8 8" className="size-[7px]">
            {i % 3 === 0 ? <circle cx="4" cy="4" r="3" fill={c} /> : <path d="M1 2H5V4H7V7H3V5H1Z" fill={c} />}
          </svg>
        ))}
        <time className="ml-auto whitespace-nowrap">11:24 PM</time>
      </div>
    </footer>
  );
}

export default function App() {
  return (
    <div className="relative flex h-screen flex-col overflow-hidden bg-[#ece9d8] font-['Roboto',sans-serif] text-[6px] leading-[7px] text-[#222]">
      <header className="flex h-[11px] shrink-0 items-center justify-between bg-linear-to-b from-[#96b0f4] to-[#7090e4] pr-[2px] pl-px">
        <h1 className="flex items-center gap-[2px] text-[6px] font-bold text-[#e8eeff]">
          <svg viewBox="0 0 8 8" className="size-[7px]">
            <path d="M0 0H8V8H0Z" fill="#208850" />
            <path d="M2 3H6V5H2Z" fill="#b0e0c0" />
          </svg>
          {/* account number is painted over */}
          <svg viewBox="0 0 20 8" className="h-[8px] w-[20px]">
            <path d="M1 2 4 1 17 1 20 3 18 7 10 8 2 7Z" fill="#0888f0" />
          </svg>
          Interbank FX Trader 4 - GBPJPYm,M1
        </h1>
        <WinButtons dim />
      </header>
      <nav className="flex h-[10px] shrink-0 items-center gap-[8px] pl-[3px] text-[5px] text-[#a09c8c]">
        {["File", "View", "Insert", "Charts", "Tools", "Window", "Help"].map((m) => (
          <button key={m}>{m}</button>
        ))}
      </nav>
      <Toolbars />
      <main className="relative min-h-0 flex-1 bg-[#808080]">
        <div className="absolute inset-x-0 top-0 h-[2px] bg-[#7e9eea]" />
        <MainChart />
        <MiniChart />
        <div className="absolute top-[132px] right-[2px] left-[467px] flex h-[11px] items-center justify-end bg-[#7e9eea]">
          <span className="h-[7px] w-[3px] bg-[#b8606c]" />
        </div>
        <BasketBars />
        <Navigator />
      </main>
      <ChartTabs />
      <Terminal />
      <div className="flex h-[9px] shrink-0 items-center justify-between px-px text-[5px]">
        <span>For Help, press F1</span>
        <span className="pr-[19px]">402/67 kb</span>
      </div>
      <Taskbar />
      <Monitor />
    </div>
  );
}
